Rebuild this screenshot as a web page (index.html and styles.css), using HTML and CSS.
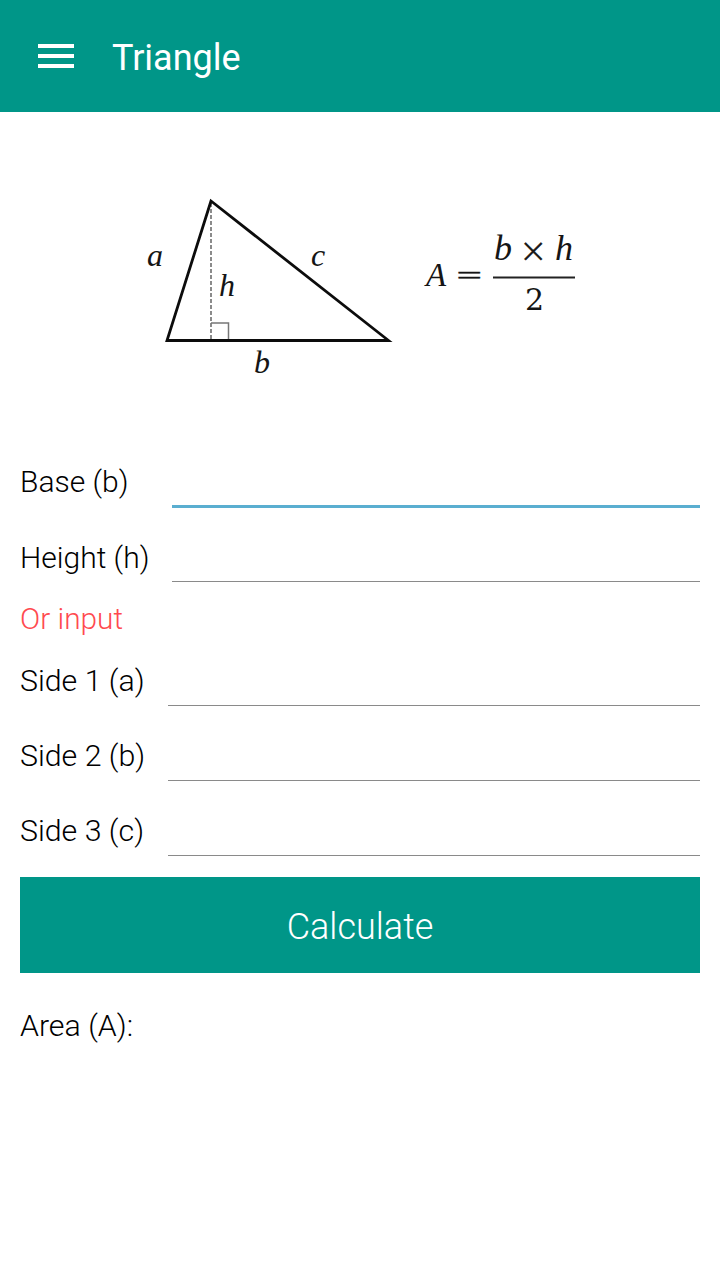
FILE: index.html
```html
<!DOCTYPE html>
<html>

<head>
  <title>Triangle</title>
  <link rel="stylesheet" href="styles.css">
</head>

<body>
  <div class="toolbar">
    <svg class="menu-icon" width="36" height="24" viewBox="0 0 36 24">
      <path d="M0 0h36v4H0zM0 10h36v4H0zM0 20h36v4H0z" fill="#fff" />
    </svg>
    <p class="title">Triangle</p>
  </div>

  <div class="figure">
    <svg class="figure-img" width="720" height="336" viewBox="0 112 720 336">
      <path d="M211 203V340" class="dash" />
      <path d="M211 323H228.500V340" class="square" />
      <path d="M211 201L167 340.500H388.500Z" class="tri" />
      <text x="147" y="266" class="var">a</text>
      <text x="219" y="296" class="var">h</text>
      <text x="311" y="266" class="var">c</text>
      <text x="254" y="373" class="var">b</text>
      <text x="426" y="286" class="var big-a">A</text>
      <text x="455" y="286" class="sym">=</text>
      <text x="494" y="260" class="var big">b</text>
      <text x="519" y="262" class="sym">×</text>
      <text x="555" y="260" class="var big">h</text>
      <path d="M493 277.500H575" class="bar" />
      <text x="525" y="310" class="num">2</text>
    </svg>
  </div>

  <div class="form">
    <div class="row row-first">
      <label class="lbl lbl-wide">Base (b)</label>
      <div class="input input-focus"></div>
    </div>
    <div class="row">
      <label class="lbl lbl-wide lbl-height">Height (h)</label>
      <div class="input"></div>
    </div>
    <p class="or">Or input</p>
    <div class="row row-side">
      <label class="lbl">Side 1 (a)</label>
      <div class="input"></div>
    </div>
    <div class="row">
      <label class="lbl">Side 2 (b)</label>
      <div class="input"></div>
    </div>
    <div class="row">
      <label class="lbl">Side 3 (c)</label>
      <div class="input"></div>
    </div>
    <button class="calc">Calculate</button>
    <p class="result">Area (A):</p>
  </div>
</body>

</html>
```

FILE: styles.css
```css
body {
  margin: 0;
  background-color: white;
  font-family: Roboto, "Noto Sans", sans-serif;
  font-weight: 300;
  color: #000;
}

p {
  margin: 0;
}

.toolbar {
  background-color: #009688;
  height: 112px;
  display: flex;
  align-items: center;
  padding-left: 38px;
}

.menu-icon {
  display: block;
}

.title {
  color: white;
  font-size: 36px;
  font-weight: 400;
  margin-left: 38px;
  padding-top: 3px;
}

.figure-img {
  display: block;
}

.tri {
  fill: none;
  stroke: #0c0c0c;
  stroke-width: 2.800;
  stroke-linejoin: miter;
}

.dash {
  fill: none;
  stroke: #666;
  stroke-width: 1.500;
  stroke-dasharray: 4 2;
}

.square {
  fill: none;
  stroke: #777;
  stroke-width: 1.500;
}

.bar {
  stroke: #222;
  stroke-width: 1.800;
}

.var {
  font-family: "Liberation Serif", serif;
  font-style: italic;
  font-size: 32px;
  fill: #151515;
}

.big {
  font-size: 36px;
}

.big-a {
  font-size: 33px;
}

.sym {
  font-family: "DejaVu Sans", sans-serif;
  font-size: 34px;
  fill: #151515;
  stroke: #151515;
  stroke-width: 0.500;
}

.num {
  font-family: "DejaVu Serif", serif;
  font-size: 30px;
  fill: #151515;
}

.form {
  padding: 0 20px;
}

.row {
  display: flex;
  align-items: center;
  height: 60px;
  margin-bottom: 15px;
}

.row-first {
  margin-bottom: 14px;
}

.row-side {
  margin-top: 9px;
}

.lbl {
  font-size: 30.300px;
  width: 148px;
  flex-shrink: 0;
  padding-top: 9px;
}

.lbl-wide {
  font-size: 30px;
  width: 152px;
  padding-top: 7px;
}

.lbl-height {
  padding-top: 10px;
}

.input {
  flex: 1;
  align-self: flex-end;
  height: 1px;
  background-color: #8a8a8a;
}

.input-focus {
  height: 3px;
  background-color: #5aaed0;
}

.or {
  color: #ff4a4f;
  font-size: 29.800px;
  line-height: 36px;
  margin-top: 19px;
}

.calc {
  display: block;
  width: 100%;
  height: 96px;
  border: none;
  padding-top: 5px;
  background-color: #009688;
  color: white;
  font-family: Roboto, sans-serif;
  font-weight: 300;
  font-size: 36px;
  margin-top: 21px;
}

.result {
  font-size: 30.300px;
  margin-top: 35px;
}
```
